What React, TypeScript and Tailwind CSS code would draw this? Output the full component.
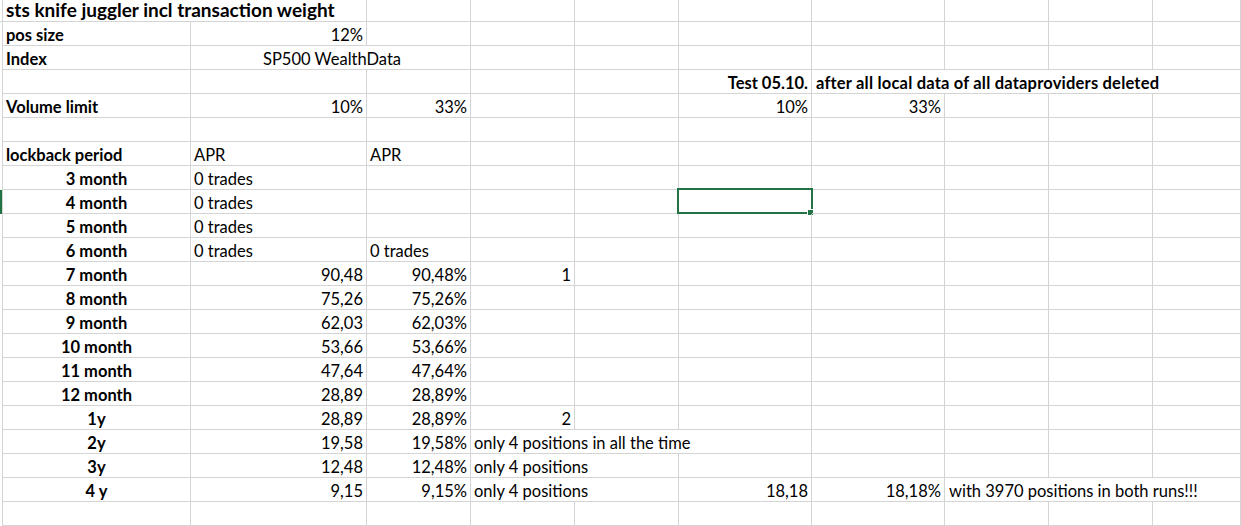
import React from "react";

type Cell = {
  text?: string;
  span?: 1 | 2 | 3 | 4;
  align?: "l" | "r" | "c";
  bold?: boolean;
  extra?: string;
  selected?: boolean;
};

const spanCls = {
  1: "",
  2: "col-span-2",
  3: "col-span-3",
  4: "col-span-4",
};

const alignCls = {
  l: "justify-start pl-[3px]",
  r: "justify-end pr-[3px]",
  c: "justify-center",
};

const E: Cell = {};
const L = (text: string, bold = false): Cell => ({ text, align: "l", bold });
const R = (text: string, bold = false): Cell => ({ text, align: "r", bold });
const C = (text: string): Cell => ({ text, align: "c", bold: true });

// 10 spreadsheet columns A..J per row, merged cells stand for overflowing text
const rows: Cell[][] = [
  [L("pos size", true), R("12%"), E, E, E, E, E, E, E, E],
  [L("Index", true), { text: "SP500 WealthData", span: 2, align: "l", extra: "pl-[72px]" }, E, E, E, E, E, E, E],
  [E, E, E, E, E, R("Test 05.10.", true), { text: "after all local data of all dataproviders deleted", span: 4, align: "l", bold: true, extra: "pl-[4px] tracking-[0.2px]" }],
  [L("Volume limit", true), R("10%"), R("33%"), E, E, R("10%"), R("33%"), E, E, E],
  [E, E, E, E, E, E, E, E, E, E],
  [L("lockback period", true), L("APR"), L("APR"), E, E, E, E, E, E, E],
  [C("3 month"), L("0 trades"), E, E, E, E, E, E, E, E],
  [C("4 month"), L("0 trades"), E, E, E, { selected: true }, E, E, E, E],
  [C("5 month"), L("0 trades"), E, E, E, E, E, E, E, E],
  [C("6 month"), L("0 trades"), L("0 trades"), E, E, E, E, E, E, E],
  [C("7 month"), R("90,48"), R("90,48%"), R("1"), E, E, E, E, E, E],
  [C("8 month"), R("75,26"), R("75,26%"), E, E, E, E, E, E, E],
  [C("9 month"), R("62,03"), R("62,03%"), E, E, E, E, E, E, E],
  [C("10 month"), R("53,66"), R("53,66%"), E, E, E, E, E, E, E],
  [C("11 month"), R("47,64"), R("47,64%"), E, E, E, E, E, E, E],
  [C("12 month"), R("28,89"), R("28,89%"), E, E, E, E, E, E, E],
  [C("1y"), R("28,89"), R("28,89%"), R("2"), E, E, E, E, E, E],
  [C("2y"), R("19,58"), R("19,58%"), { text: "only 4 positions in all the time", span: 3, align: "l" }, E, E, E, E],
  [C("3y"), R("12,48"), R("12,48%"), { text: "only 4 positions", span: 2, align: "l" }, E, E, E, E, E],
  [C("4 y"), R("9,15"), R("9,15%"), { text: "only 4 positions", span: 2, align: "l" }, R("18,18"), R("18,18%"), { text: "with 3970 positions in both runs!!!", span: 3, align: "l", extra: "pl-[4px]" }],
  [E, E, E, E, E, E, E, E, E, E],
];

function SheetCell({ cell }: { cell: Cell }) {
  const span = spanCls[cell.span ?? 1];
  const align = alignCls[cell.align ?? "l"];
  return (
    <div
      className={`relative flex items-end pb-[2px] h-[24px] border-r border-b border-[#d4d4d4] whitespace-nowrap ${span} ${align} ${cell.bold ? "font-bold" : ""} ${cell.extra ?? ""}`}
    >
      {cell.text}
      {cell.selected && (
        <div className="absolute left-[-2px] top-[-2px] w-[136px] h-[26px] border-2 border-[#217346]">
          <div className="absolute left-[128px] top-[19px] w-[7px] h-[7px] bg-white p-[1px]">
            <div className="w-full h-full bg-[#217346]" />
          </div>
        </div>
      )}
    </div>
  );
}

export default function App() {
  return (
    <div className="w-[1241px] h-[526px] overflow-hidden bg-white text-black text-[16.5px] leading-[16px] font-['Lato',sans-serif]">
      <div className="grid grid-cols-[3px_188px_176px_104px_104px_104px_133px_133px_104px_104px_1fr]">
        {/* title row */}
        <div className="h-[22px] border-r border-b border-[#d4d4d4]" />
        <div className="col-span-2 h-[22px] flex items-end pb-[3px] pl-[3px] border-r border-b border-[#d4d4d4] whitespace-nowrap text-[19px] font-bold">
          sts knife juggler incl transaction weight
        </div>
        {Array.from({ length: 8 }).map((_, i) => (
          <div key={i} className="h-[22px] border-r border-b border-[#d4d4d4]" />
        ))}

        {rows.map((row, r) => (
          <React.Fragment key={r}>
            <div className={`h-[24px] border-r border-[#d4d4d4] ${r === 7 ? "bg-[#217346]" : ""}`} />
            {row.map((cell, c) => (
              <SheetCell key={c} cell={cell} />
            ))}
          </React.Fragment>
        ))}
      </div>
    </div>
  );
}
